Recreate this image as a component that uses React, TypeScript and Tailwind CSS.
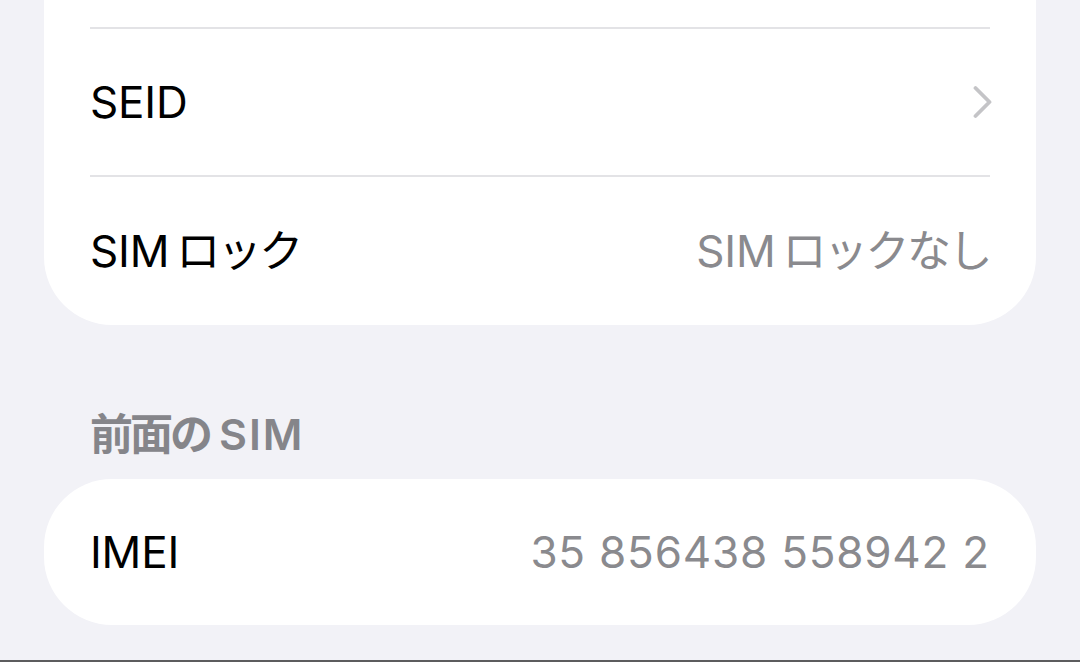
const font = { fontFamily: 'Inter, "Noto Sans CJK JP", sans-serif' };

function Chevron() {
  return (
    <svg width="20" height="34" viewBox="0 0 20 34" fill="none" className="shrink-0 -mr-[2px]">
      <path d="M3.5 3 L17.5 17 L3.5 31" stroke="#c4c4c7" strokeWidth="3.8" strokeLinecap="round" strokeLinejoin="round" />
    </svg>
  );
}

// "SIM" followed by kana, with the small gap iOS puts between scripts
function SimText({ kana }: { kana: string }) {
  return (
    <>
      SIM<span className="ml-[7px] tracking-[-2.5px]">{kana}</span>
    </>
  );
}

function Row({ label, value, chevron, last }: { label?: React.ReactNode; value?: React.ReactNode; chevron?: boolean; last?: boolean }) {
  return (
    <div
      className={
        "mx-[46px] flex items-center justify-between " +
        (last ? "h-[148px]" : "h-[148px] border-b-2 border-[#e3e3e6]")
      }
    >
      <span className="text-[44px] text-black tracking-[-0.2px]">{label}</span>
      {value && <span className="text-[44px] text-[#8a8a8e] tracking-[-0.2px]">{value}</span>}
      {chevron && <Chevron />}
    </div>
  );
}

export default function App() {
  return (
    <div className="h-[662px] w-[1080px] overflow-hidden bg-[#f2f2f7] border-b-2 border-[#5c5c5e]" style={font}>
      <div className="px-[44px]">
        <div className="-mt-[119px] bg-white rounded-b-[68px]">
          <Row />
          <Row label="SEID" chevron />
          <Row label={<SimText kana="ロック" />} value={<SimText kana="ロックなし" />} last />
        </div>
        <div className="pl-[46px] pt-[86px] pb-[22px] h-[154px] flex items-center">
          <span className="text-[43px] font-semibold text-[#85858a] leading-none">
            <span className="tracking-[-3px]">前面の</span>
            <span className="ml-[9px] tracking-[2px]">SIM</span>
          </span>
        </div>
        <div className="bg-white rounded-[68px] h-[146px] px-[46px] flex items-center justify-between">
          <span className="text-[44px] text-black tracking-[-0.2px]">IMEI</span>
          <span className="text-[44px] text-[#8a8a8e] tracking-[0.8px]">35 856438 558942 2</span>
        </div>
      </div>
    </div>
  );
}
